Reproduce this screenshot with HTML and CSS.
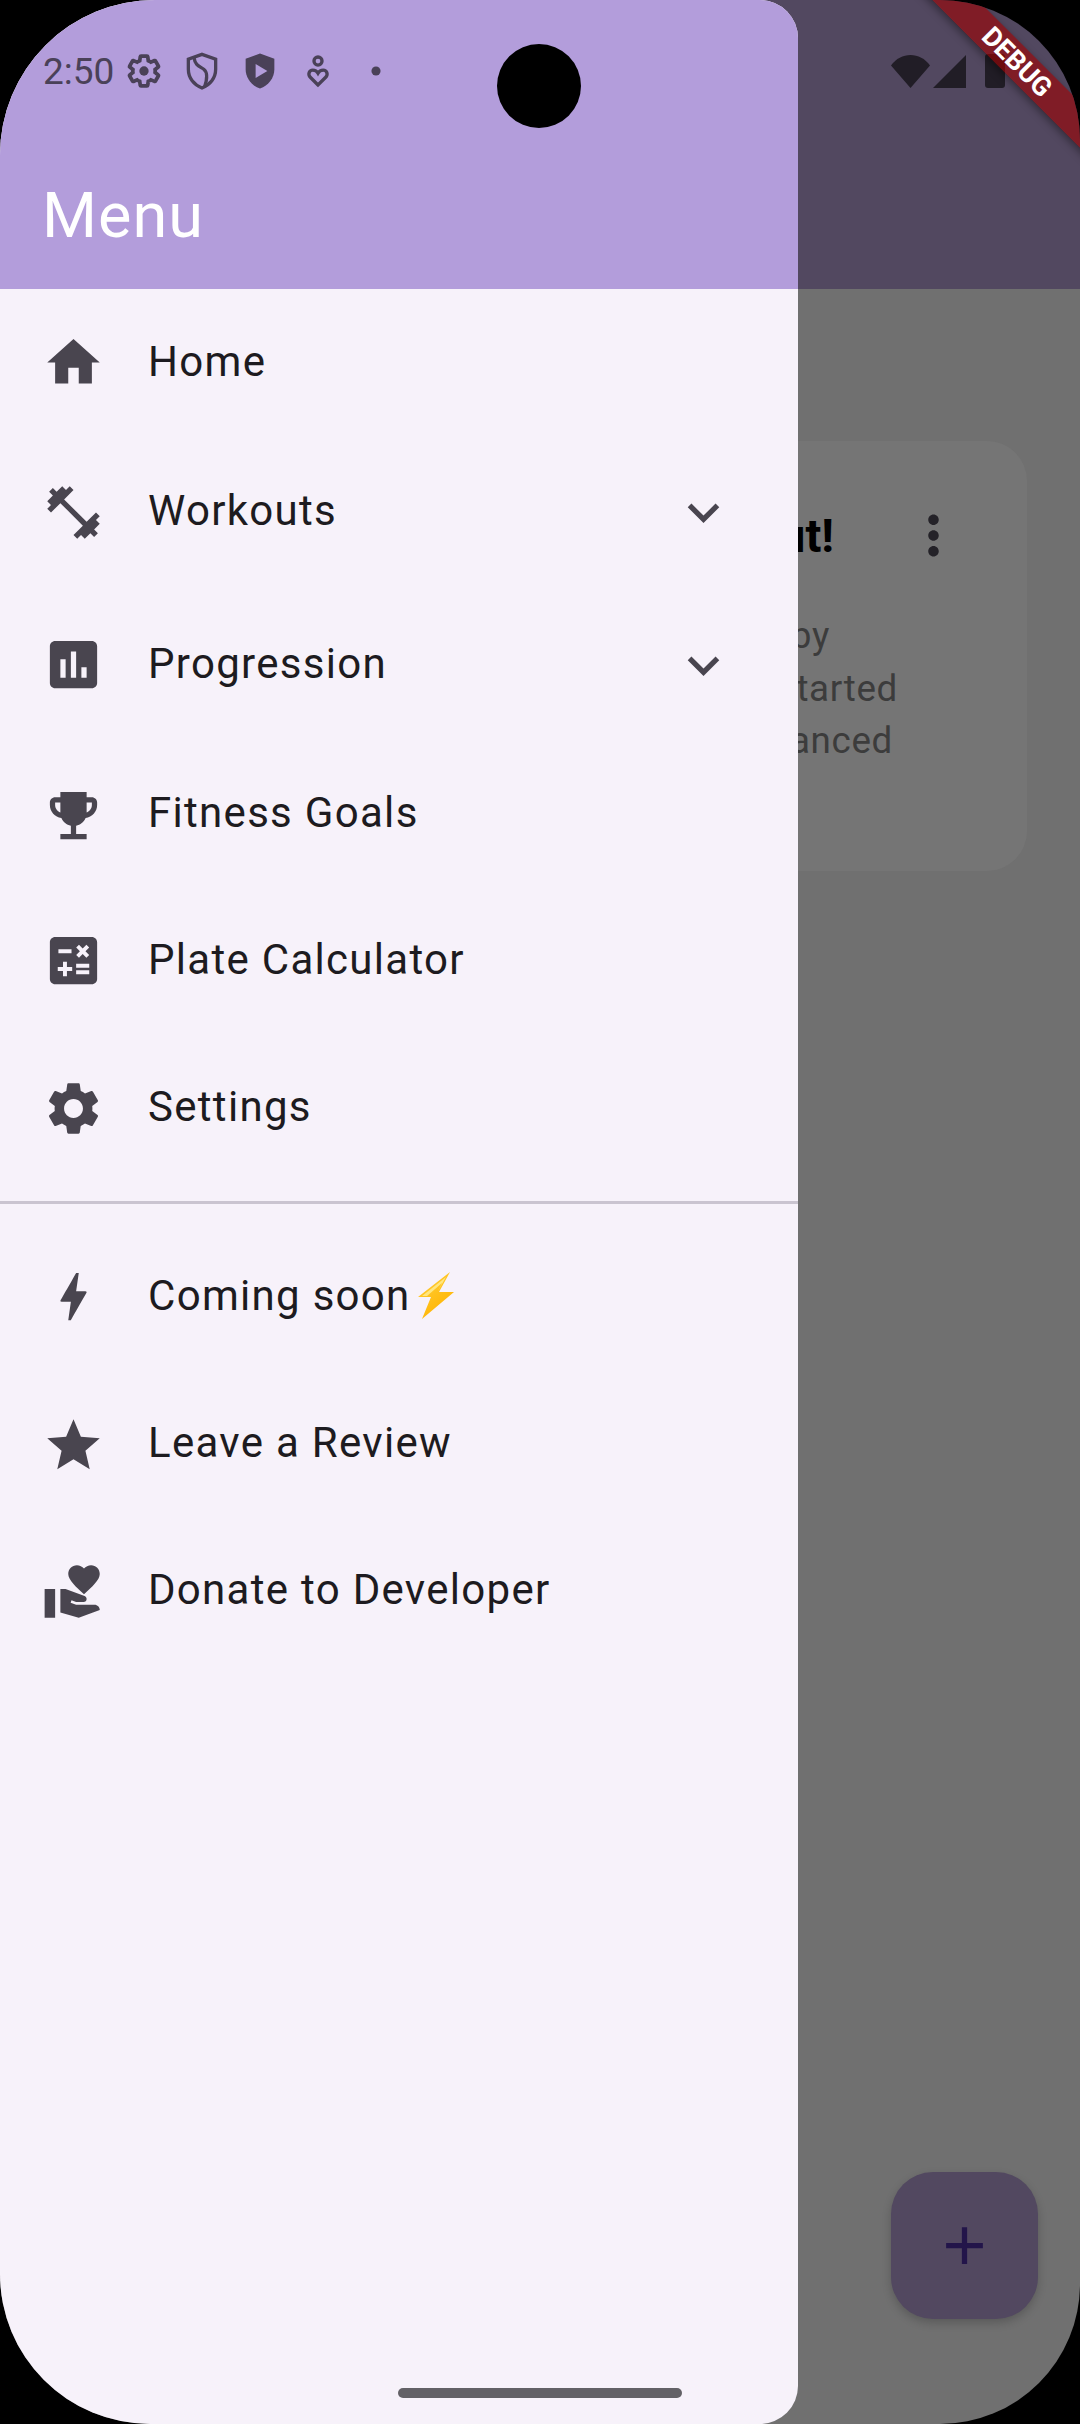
FILE: index.html
```html
<!DOCTYPE html>
<html lang="en">
<head>
    <meta charset="UTF-8">
    <meta name="viewport" content="width=device-width, initial-scale=1.0">
    <title>Menu</title>
    <link rel="stylesheet" href="styles.css">
</head>
<body>
    <div class="screen">
        <div class="backdrop">
            <div class="app-bar"></div>
            <div class="page">
                <div class="card">
                    <div class="card-text">
                        <div class="card-title">Start your first workout!</div>
                        <div class="card-body">
                            <div class="line line-short">Log your workouts, guided by</div>
                            <div class="line">experts. Tap + to get started</div>
                            <div class="line line-mid">and keep training balanced</div>
                        </div>
                    </div>
                    <svg class="icon more-icon" viewBox="0 0 24 24"><path d="M12 8c1.1 0 2-.9 2-2s-.9-2-2-2-2 .9-2 2 .9 2 2 2zm0 2c-1.1 0-2 .9-2 2s.9 2 2 2 2-.9 2-2-.9-2-2-2zm0 6c-1.1 0-2 .9-2 2s.9 2 2 2 2-.9 2-2-.9-2-2-2z"/></svg>
                </div>
            </div>
            <div class="fab">
                <svg class="icon" viewBox="0 0 24 24"><path d="M19 13h-6v6h-2v-6H5v-2h6V5h2v6h6v2z"/></svg>
            </div>
        </div>

        <!-- Drawer -->
        <div class="drawer">
            <div class="drawer-header">Menu</div>
            <div class="nav-row row-home">
                <svg class="icon nav-icon icon-high" viewBox="0 0 24 24"><path d="M10 20v-6h4v6h5v-8h3L12 3 2 12h3v8z"/></svg>
                <span class="nav-label">Home</span>
            </div>
            <div class="nav-row row-expand">
                <svg class="icon nav-icon" viewBox="0 0 24 24"><path d="M20.57 14.86L22 13.43 20.57 12 17 15.57 8.43 7 12 3.43 10.57 2 9.14 3.43 7.71 2 5.57 4.14 4.14 2.71 2.71 4.14l1.43 1.43L2 7.71l1.43 1.43L2 10.57 3.43 12 7 8.43 15.57 17 12 20.57 13.43 22l1.43-1.43L16.29 22l2.14-2.14 1.43 1.43 1.43-1.43-1.43-1.43L22 16.29z"/></svg>
                <span class="nav-label">Workouts</span>
                <svg class="icon chevron" viewBox="0 0 24 24"><path d="M16.59 8.59L12 13.17 7.41 8.59 6 10l6 6 6-6z"/></svg>
            </div>
            <div class="nav-row row-expand">
                <svg class="icon nav-icon icon-high" viewBox="0 0 24 24"><path d="M19 3H5c-1.1 0-2 .9-2 2v14c0 1.1.9 2 2 2h14c1.1 0 2-.9 2-2V5c0-1.1-.9-2-2-2zM9 17H7v-7h2v7zm4 0h-2V7h2v10zm4 0h-2v-4h2v4z"/></svg>
                <span class="nav-label">Progression</span>
                <svg class="icon chevron" viewBox="0 0 24 24"><path d="M16.59 8.59L12 13.17 7.41 8.59 6 10l6 6 6-6z"/></svg>
            </div>
            <div class="nav-row row-home">
                <svg class="icon nav-icon icon-fitness" viewBox="0 0 24 24"><path d="M19 5h-2V3H7v2H5c-1.1 0-2 .9-2 2v1c0 2.55 1.92 4.63 4.39 4.94.63 1.5 1.98 2.63 3.61 2.96V19H7v2h10v-2h-4v-3.1c1.63-.33 2.98-1.46 3.61-2.96C19.08 12.63 21 10.55 21 8V7c0-1.1-.9-2-2-2zM5 8V7h2v3.82C5.84 10.4 5 9.3 5 8zm14 0c0 1.3-.84 2.4-2 2.82V7h2v1z"/></svg>
                <span class="nav-label">Fitness Goals</span>
            </div>
            <div class="nav-row row-plate">
                <svg class="icon nav-icon" viewBox="0 0 24 24"><path fill-rule="evenodd" d="M19 3H5c-1.1 0-2 .9-2 2v14c0 1.1.9 2 2 2h14c1.1 0 2-.9 2-2V5c0-1.1-.9-2-2-2zm-5.97 4.06L14.09 6l1.41 1.41L16.91 6l1.06 1.06-1.41 1.41 1.41 1.41-1.06 1.06-1.41-1.4-1.41 1.41-1.06-1.06 1.41-1.41-1.41-1.42zm-6.78.66h5v1.5h-5v-1.5zM11.5 16h-2v2H8v-2H6v-1.5h2v-2h1.5v2h2V16zm6.5 1.25h-5v-1.5h5v1.5zm0-2.5h-5v-1.5h5v1.5z"/></svg>
                <span class="nav-label">Plate Calculator</span>
            </div>
            <div class="nav-row row-settings">
                <svg class="icon nav-icon icon-fitness" viewBox="0 0 24 24"><path d="M19.14 12.94c.04-.3.06-.61.06-.94 0-.32-.02-.64-.07-.94l2.03-1.58c.18-.14.23-.41.12-.61l-1.92-3.32c-.12-.22-.37-.29-.59-.22l-2.39.96c-.5-.38-1.03-.7-1.62-.94l-.36-2.54c-.04-.24-.24-.41-.48-.41h-3.84c-.24 0-.43.17-.47.41l-.36 2.54c-.59.24-1.13.57-1.62.94l-2.39-.96c-.22-.08-.47 0-.59.22L2.74 8.87c-.12.21-.08.47.12.61l2.03 1.58c-.05.3-.09.63-.09.94s.02.64.07.94l-2.03 1.58c-.18.14-.23.41-.12.61l1.92 3.32c.12.22.37.29.59.22l2.39-.96c.5.38 1.03.7 1.62.94l.36 2.54c.05.24.24.41.48.41h3.84c.24 0 .44-.17.47-.41l.36-2.54c.59-.24 1.13-.56 1.62-.94l2.39.96c.22.08.47 0 .59-.22l1.92-3.32c.12-.22.07-.47-.12-.61l-2.01-1.58zM12 15.6c-1.98 0-3.6-1.62-3.6-3.6s1.62-3.6 3.6-3.6 3.6 1.62 3.6 3.6-1.62 3.6-3.6 3.6z"/></svg>
                <span class="nav-label">Settings</span>
            </div>
            <div class="drawer-divider"></div>
            <div class="nav-row row-soon">
                <svg class="icon nav-icon" viewBox="0 0 24 24"><path d="M11 21h-1l1-7H7.5c-.58 0-.57-.32-.38-.66.19-.34.05-.08.07-.12C8.48 10.94 10.42 7.54 13 3h1l-1 7h3.5c.49 0 .56.33.47.51l-.07.15C12.96 17.55 11 21 11 21z"/></svg>
                <span class="nav-label">Coming soon</span>
                <svg class="bolt-emoji" viewBox="0 0 36 47">
                    <defs>
                        <linearGradient id="boltFill" x1="0" y1="0" x2="0.6" y2="1">
                            <stop offset="0" stop-color="#ffd23f"/>
                            <stop offset="1" stop-color="#ffb300"/>
                        </linearGradient>
                    </defs>
                    <path fill="url(#boltFill)" d="M32 0L0 25H13L4 47 36 20H21Z"/>
                    <path fill="#ffe680" d="M28 5L4 24H9L24 11 19.500 20Z"/>
                </svg>
            </div>
            <div class="nav-row row-lower">
                <svg class="icon nav-icon icon-low" viewBox="0 0 24 24"><path d="M12 17.27L18.18 21l-1.64-7.03L22 9.24l-7.19-.61L12 2 9.19 8.63 2 9.24l5.46 4.73L5.82 21z"/></svg>
                <span class="nav-label">Leave a Review</span>
            </div>
            <div class="nav-row row-last">
                <svg class="icon nav-icon" viewBox="0 0 24 24"><path d="M1 11h4v11H1zm15-7.75C16.65 2.49 17.66 2 18.7 2 20.55 2 22 3.45 22 5.3c0 2.27-2.91 4.9-6 7.7-3.09-2.81-6-5.44-6-7.7C10 3.45 11.45 2 13.3 2c1.04 0 2.05.49 2.7 1.25zM20 17h-7l-2.09-.73.33-.94L13 16h2.82c.65 0 1.18-.53 1.18-1.18 0-.49-.31-.93-.77-1.11L8.97 11H7v9.02L14 22l8.01-3c-.01-1.1-.9-2-2.01-2z"/></svg>
                <span class="nav-label">Donate to Developer</span>
            </div>
        </div>

        <!-- System bar on top of everything -->
        <div class="status-bar">
            <div class="status-left">
                <span class="status-time">2:50</span>
                <svg class="status-icon" viewBox="-1.500 -1.500 27 27">
                    <path class="outline gear-outline" d="M19.14 12.94c.04-.3.06-.61.06-.94 0-.32-.02-.64-.07-.94l2.03-1.58c.18-.14.23-.41.12-.61l-1.92-3.32c-.12-.22-.37-.29-.59-.22l-2.39.96c-.5-.38-1.03-.7-1.62-.94l-.36-2.54c-.04-.24-.24-.41-.48-.41h-3.84c-.24 0-.43.17-.47.41l-.36 2.54c-.59.24-1.13.57-1.62.94l-2.39-.96c-.22-.08-.47 0-.59.22L2.74 8.87c-.12.21-.08.47.12.61l2.03 1.58c-.05.3-.09.63-.09.94s.02.64.07.94l-2.03 1.58c-.18.14-.23.41-.12.61l1.92 3.32c.12.22.37.29.59.22l2.39-.96c.5.38 1.03.7 1.62.94l.36 2.54c.05.24.24.41.48.41h3.84c.24 0 .44-.17.47-.41l.36-2.54c.59-.24 1.13-.56 1.62-.94l2.39.96c.22.08.47 0 .59-.22l1.92-3.32c.12-.22.07-.47-.12-.61l-2.01-1.58z"/>
                    <circle cx="12" cy="12" r="3"/>
                </svg>
                <svg class="status-icon" viewBox="0 0 24 24">
                    <path class="outline" d="M12 2.500L19.800 5.200V11C19.800 16 16.600 20 12 21.700 7.400 20 4.200 16 4.200 11V5.200Z"/>
                    <path class="outline" d="M7.500 4.500C8 9 11 9.500 13 11 15 12.500 15 16.500 13.500 21"/>
                </svg>
                <svg class="status-icon" viewBox="0 0 24 24">
                    <path d="M12 2L20.200 5V11C20.200 16 16.800 20.400 12 22 7.200 20.400 3.800 16 3.800 11V5Z"/>
                    <path class="cutout" d="M9.500 8L16.200 12 9.500 16Z"/>
                </svg>
                <svg class="status-icon" viewBox="0 0 24 24">
                    <circle class="outline" cx="12" cy="6.300" r="2.300"/>
                    <path class="outline" d="M12 20L7.600 15.600C6 14 7 11.500 9 11.500 10.500 11.500 11.500 12.300 12 13.200 12.500 12.300 13.500 11.500 15 11.500 17 11.500 18 14 16.400 15.600Z"/>
                </svg>
                <svg class="status-icon" viewBox="0 0 24 24"><circle cx="12" cy="12" r="2.600"/></svg>
            </div>
            <div class="status-right">
                <svg class="wifi" viewBox="0 0 39 33"><path d="M0 10.500C5 3.500 12 0 19.500 0S34 3.500 39 10.500L19.500 33z"/></svg>
                <svg class="signal" viewBox="0 0 33 33"><path d="M33 0V33H0z"/></svg>
                <div class="battery"></div>
            </div>
        </div>
        <div class="camera"></div>
        <div class="home-pill"></div>
        <div class="debug-banner">DEBUG</div>
    </div>
</body>
</html>
```

FILE: styles.css
```css
* {
    box-sizing: border-box;
}

body {
    margin: 0;
    background: #000;
    font-family: Roboto, sans-serif;
}

.screen {
    position: relative;
    width: 1080px;
    height: 2424px;
    overflow: hidden;
    border-radius: 155px 140px 140px 150px;
}

.icon {
    display: block;
    width: 63px;
    height: 63px;
    flex: none;
    fill: currentColor;
}

/* Dimmed page */
.backdrop {
    display: flex;
    flex-direction: column;
    height: 100%;
}

.app-bar {
    height: 289px;
    background: #524860;
}

.page {
    flex: 1;
    padding: 152px 53px 0 42px;
    background: #707070;
}

.card {
    display: flex;
    justify-content: flex-end;
    height: 430px;
    padding: 63px 62px 0 0;
    background: #757575;
    border-radius: 40px;
}

.card-text {
    flex: 1;
    min-width: 0;
    padding-top: 4px;
    text-align: right;
    white-space: nowrap;
}

.card-title {
    padding-right: 68px;
    color: #000;
    font-size: 47px;
    font-weight: 700;
}

.card-body {
    margin-top: 47px;
    margin-right: 4px;
    color: #3c3c3c;
    font-size: 36.75px;
    line-height: 52.5px;
    letter-spacing: 0.66px;
}

.line-short {
    padding-right: 68px;
}

.line-mid {
    padding-right: 5px;
}

.more-icon {
    color: #242228;
}

.fab {
    position: absolute;
    right: 42px;
    bottom: 105px;
    display: flex;
    align-items: center;
    justify-content: center;
    width: 147px;
    height: 147px;
    color: #23154a;
    background: #524860;
    border-radius: 42px;
    box-shadow: 0 4px 10px rgba(0, 0, 0, 0.2);
}

/* Drawer */
.drawer {
    position: absolute;
    top: 0;
    left: 0;
    bottom: 0;
    width: 798px;
    background: #f7f2fa;
    border-radius: 0 38px 38px 0;
    overflow: hidden;
}

.drawer-header {
    display: flex;
    align-items: flex-end;
    height: 289px;
    padding: 0 0 37px 42px;
    color: #fff;
    background: #b39ddb;
    font-size: 63px;
    letter-spacing: 1px;
}

.nav-row {
    display: flex;
    align-items: center;
    padding: 0 63px 0 42px;
    color: #1d1b20;
}

.row-home {
    height: 145px;
}

.row-expand {
    height: 153px;
}

.row-plate {
    height: 148px;
}

.row-settings {
    height: 146px;
}

.row-soon {
    height: 146px;
}

.row-lower {
    height: 148px;
}

.row-last {
    height: 147px;
}

.nav-icon {
    margin: 3px 43px 0 0;
    color: #49454f;
}

.icon-high {
    margin-top: 1px;
}

.icon-fitness {
    margin-top: 5px;
}

.icon-low {
    margin-top: 7px;
}

.nav-label {
    font-size: 42px;
    letter-spacing: 1.3px;
}

.chevron {
    margin: 3px 0 0 auto;
    color: #49454f;
}

.bolt-emoji {
    width: 36px;
    height: 47px;
    margin-left: 7px;
}

.drawer-divider {
    height: 3px;
    margin: 22px 0 18px;
    background: #cac4d0;
}

/* System bar */
.status-bar {
    position: absolute;
    top: 50px;
    left: 0;
    right: 0;
    display: flex;
    justify-content: space-between;
    align-items: center;
    height: 42px;
    padding: 0 75px 0 43px;
}

.status-left {
    display: flex;
    align-items: center;
    gap: 16px;
    color: #4a4158;
}

.status-time {
    margin-right: -7px;
    font-size: 37px;
}

.status-icon {
    width: 42px;
    height: 42px;
    fill: currentColor;
}

.status-icon .outline {
    fill: none;
    stroke: currentColor;
    stroke-width: 1.9;
}

.status-icon .gear-outline {
    stroke-width: 2.4;
}

.status-icon .cutout {
    fill: #b39ddb;
}

.status-right {
    display: flex;
    align-items: center;
    fill: #211d26;
}

.wifi {
    width: 39px;
    height: 33px;
    margin-right: 3px;
}

.signal {
    width: 33px;
    height: 33px;
    margin-right: 19px;
}

.battery {
    width: 20px;
    height: 34px;
    background: #211d26;
    border-radius: 3px;
}

.camera {
    position: absolute;
    top: 44px;
    left: 497px;
    width: 84px;
    height: 84px;
    background: #000;
    border-radius: 50%;
}

.home-pill {
    position: absolute;
    left: 398px;
    bottom: 26px;
    width: 284px;
    height: 10px;
    background: #636166;
    border-radius: 5px;
}

.debug-banner {
    position: absolute;
    top: 46px;
    left: 867px;
    width: 300px;
    height: 32px;
    color: #fff;
    background: rgba(160, 0, 0, 0.6);
    box-shadow: 0 3px 8px rgba(0, 0, 0, 0.4);
    font-size: 27px;
    font-weight: 700;
    line-height: 32px;
    text-align: center;
    transform: rotate(45deg);
}
```
